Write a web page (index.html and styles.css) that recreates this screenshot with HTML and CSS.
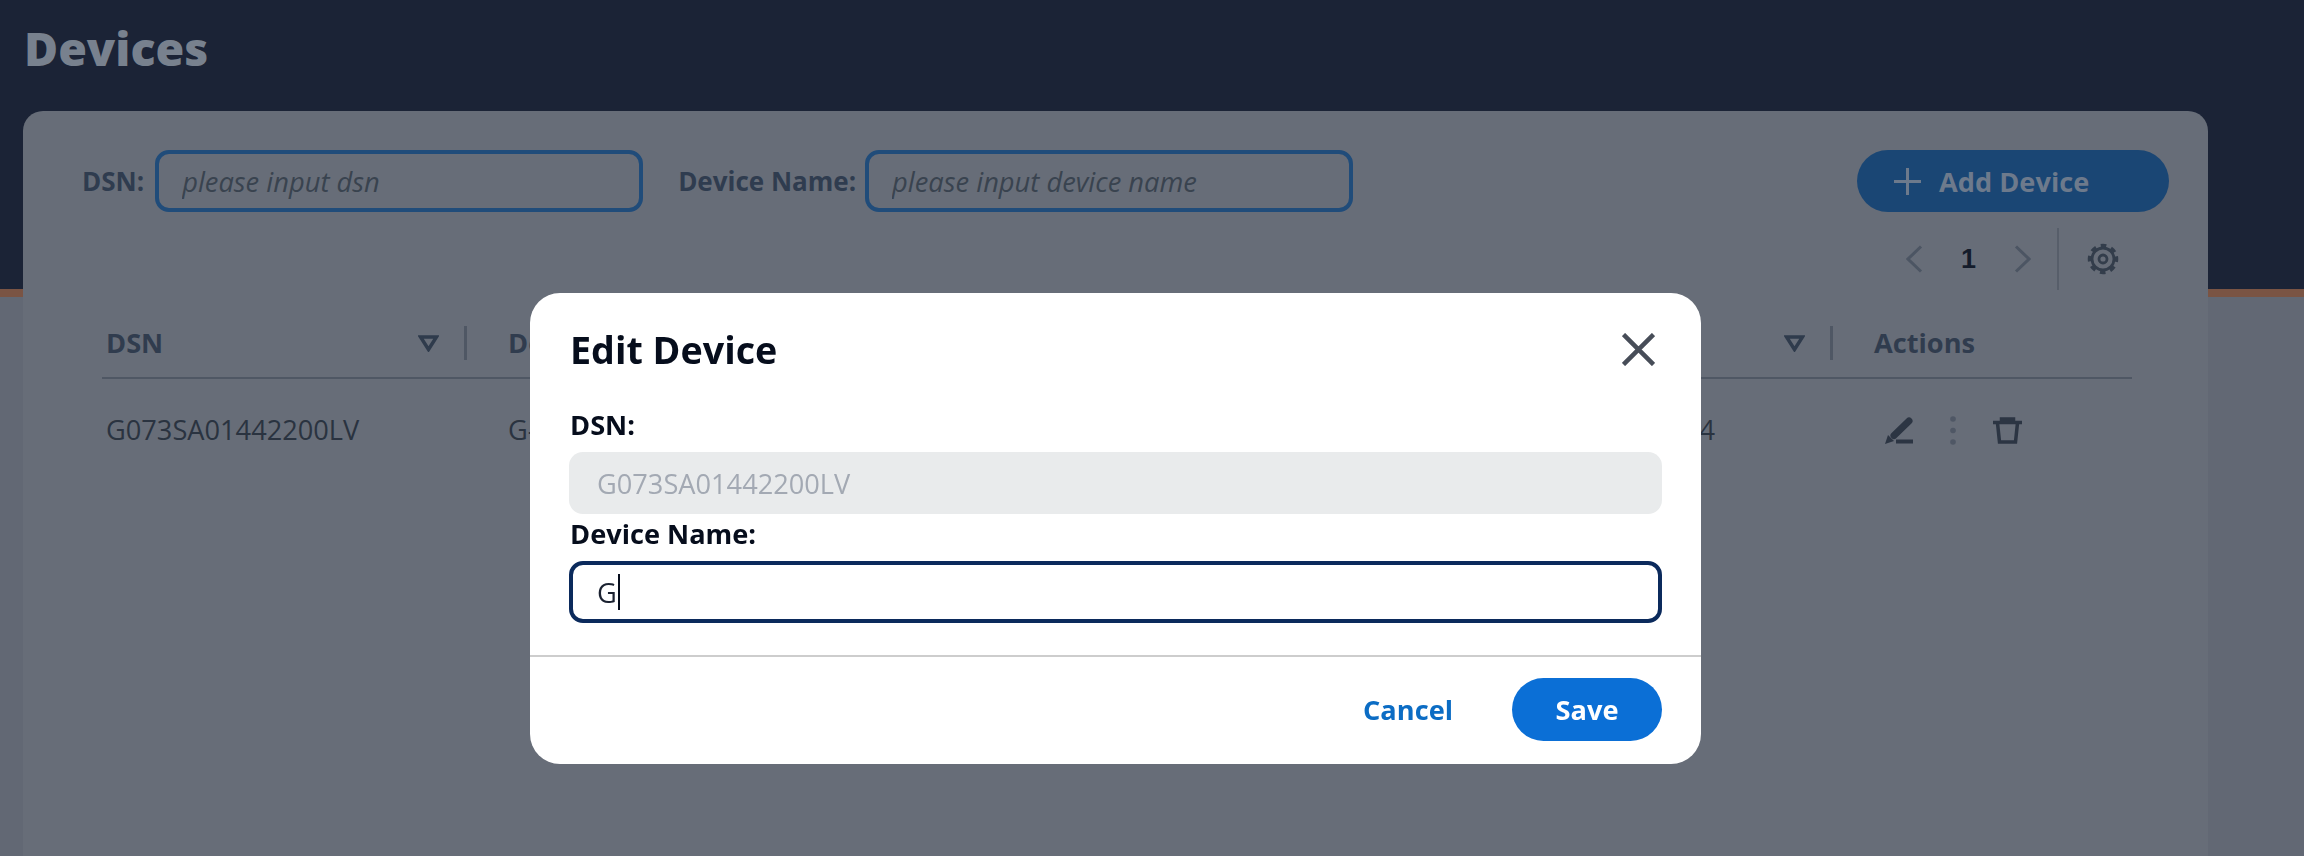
FILE: index.html
```html
<!DOCTYPE html>
<html lang="en">
  <head>
    <title>Devices</title>
    <meta charset="utf-8" />
    <link rel="stylesheet" href="styles.css">
  </head>
  <body>
    <div class="page-head">
      <h1 class="page-title">Devices</h1>
    </div>

    <div class="card">
      <div class="toolbar">
        <label class="search-label">DSN:</label>
        <input class="search-input" placeholder="please input dsn">
        <label class="search-label search-label-2">Device Name:</label>
        <input class="search-input" placeholder="please input device name">
        <button class="add-btn">
          <svg width="27" height="27" viewBox="0 0 27 27"><path d="M13.5 0v27M0 13.5h27" stroke="currentColor" stroke-width="3" fill="none"/></svg>
          Add Device
        </button>
      </div>

      <div class="pager">
        <svg class="chev" width="17" height="28" viewBox="0 0 17 28"><path d="M15 1.5 2 14l13 12.5" /></svg>
        <span class="page-num">1</span>
        <svg class="chev" width="17" height="28" viewBox="0 0 17 28"><path d="M2 1.5 15 14 2 26.5" /></svg>
        <span class="pager-sep"></span>
        <svg class="gear" width="32" height="32" viewBox="0 0 32 32">
          <circle cx="16" cy="16" r="11"/>
          <circle class="gear-teeth" cx="16" cy="16" r="13.500" transform="rotate(-11 16 16)"/>
          <circle cx="16" cy="16" r="4"/>
        </svg>
      </div>

      <div class="table">
        <div class="th"><span>DSN</span><span class="th-tools"><svg class="tri" width="21" height="17" viewBox="0 0 21 17"><path d="M2.500 2h16l-8 12.500z"/></svg><i class="th-sep"></i></span></div>
        <div class="th"><span class="th-clip">Device Name</span></div>
        <div class="th th-end"><span class="th-tools"><svg class="tri" width="21" height="17" viewBox="0 0 21 17"><path d="M2.500 2h16l-8 12.500z"/></svg><i class="th-sep"></i></span></div>
        <div class="th"><span>Actions</span></div>

        <div class="td">G073SA01442200LV</div>
        <div class="td">G-</div>
        <div class="td td-end">4</div>
        <div class="td td-actions">
          <svg width="28" height="27" viewBox="0 0 28 27">
            <path class="line-fat" d="M9 18.500 24 4"/>
            <path class="fill" d="M0 27l3-9 6 6z"/>
            <rect class="fill" x="11" y="22.500" width="17" height="4"/>
          </svg>
          <svg class="dots" width="6" height="29" viewBox="0 0 6 29"><circle cx="3" cy="3" r="2.800"/><circle cx="3" cy="14.500" r="2.800"/><circle cx="3" cy="26" r="2.800"/></svg>
          <svg width="29" height="27" viewBox="0 0 29 27">
            <path class="line" d="M0 5.500h29M8.500 4V2h12v2"/>
            <path class="line" d="M4.500 6l2 19h16l2-19"/>
          </svg>
        </div>
      </div>
    </div>

    <!-- modal sits over the dimmed page -->
    <div class="modal-wrap">
      <div class="modal">
        <div class="modal-head">
          <h2 class="modal-title">Edit Device</h2>
          <svg class="modal-close" width="33" height="33" viewBox="0 0 33 33"><path d="M1.500 1.500l30 30M31.500 1.500l-30 30"/></svg>
        </div>
        <div class="modal-body">
          <label class="field-label">DSN:</label>
          <input class="field field-off" value="G073SA01442200LV" disabled>
          <label class="field-label">Device Name:</label>
          <div class="field field-on">G<span class="caret"></span></div>
        </div>
        <div class="modal-foot">
          <button class="btn-cancel">Cancel</button>
          <button class="btn-save">Save</button>
        </div>
      </div>
    </div>
  </body>
</html>
```

FILE: styles.css
```css
html {
  height: 100%;
}
body {
  margin: 0;
  height: 100%;
  overflow: hidden;
  display: flex;
  flex-direction: column;
  background: #626874;
  font-family: "Open Sans", "Noto Sans", sans-serif;
  font-size: 27.200px;
  color: #2c3543;
}

.page-head {
  height: 289px;
  flex: none;
  background: #1b2336;
  border-bottom: 8px solid #7a5444;
}
.page-title {
  margin: 0;
  padding: 22px 0 0 24px;
  font-size: 46.500px;
  line-height: 52px;
  font-weight: 800;
  color: #78818e;
}

.card {
  flex: 1;
  margin: -186px 96px 0 23px;
  padding: 39px 39px 0 59px;
  background: #676d78;
  border-radius: 20px 20px 0 0;
}

.toolbar {
  display: flex;
  align-items: center;
}
.search-label {
  font-weight: 700;
  font-size: 26px;
  color: #2f3c4f;
  margin-right: 11px;
}
.search-label-2 {
  margin-left: 35px;
  margin-right: 9px;
}
.search-input {
  box-sizing: border-box;
  width: 488px;
  height: 62px;
  padding: 0 23px;
  background: transparent;
  border: 4px solid #204c7a;
  border-radius: 14px;
  font: inherit;
  font-size: 27.300px;
  outline: none;
}
.search-input::placeholder {
  font-style: italic;
  color: #39434f;
  opacity: 1;
}
.add-btn {
  margin-left: auto;
  width: 312px;
  height: 62px;
  padding: 0 0 0 37px;
  display: flex;
  align-items: center;
  gap: 18px;
  background: #1a4674;
  color: #6d7a8c;
  border: 0;
  border-radius: 31px;
  font: inherit;
  font-weight: 700;
}

.pager {
  display: flex;
  align-items: center;
  justify-content: flex-end;
  height: 62px;
  margin-top: 16px;
  padding-right: 50px;
}
.chev path {
  fill: none;
  stroke: #4c5563;
  stroke-width: 3;
}
.page-num {
  width: 91px;
  text-align: center;
  font-weight: 700;
  font-family: "Liberation Sans", sans-serif;
  font-size: 27px;
  color: #141c2b;
}
.pager-sep {
  width: 2px;
  height: 62px;
  margin: 0 28px 0 26px;
  background: #575e6a;
}
.gear circle {
  fill: none;
  stroke: #333d4b;
  stroke-width: 2.800;
}
.gear .gear-teeth {
  stroke-width: 3.500;
  stroke-dasharray: 5.500 5.100;
}

.table {
  display: grid;
  grid-template-columns: 402px 700px 666px 262px;
  margin: 19px 0 0 20px;
  width: 2030px;
}
.th {
  box-sizing: border-box;
  height: 70px;
  display: flex;
  align-items: center;
  justify-content: space-between;
  padding: 0 0 2px 4px;
  font-weight: 700;
  color: #303c4e;
  border-bottom: 2px solid #4f5764;
}
.th-end {
  justify-content: flex-end;
}
.th-clip {
  max-width: 22px;
  overflow: hidden;
  white-space: nowrap;
}
.th-tools {
  display: flex;
  align-items: center;
  gap: 25px;
  padding-right: 37px;
  margin-top: 2px;
}
.tri path {
  fill: none;
  stroke: #2f3b4c;
  stroke-width: 3.500;
}
.th-sep {
  width: 3px;
  height: 34px;
  background: #4f5764;
}
.td {
  padding: 32px 0 0 4px;
  line-height: 38px;
  color: #2a3340;
}
.td-end {
  text-align: right;
  padding-right: 155px;
}
.td-actions {
  display: flex;
  align-items: center;
  gap: 37px;
  padding-left: 15px;
}
.fill {
  fill: #2c3543;
}
.line {
  fill: none;
  stroke: #2c3543;
  stroke-width: 3.500;
}
.line-fat {
  fill: none;
  stroke: #2c3543;
  stroke-width: 7;
  stroke-linecap: round;
}
.dots circle {
  fill: #4f5765;
}

.modal-wrap {
  position: fixed;
  top: 293px;
  left: 530px;
}
.modal {
  box-sizing: border-box;
  width: 1171px;
  height: 471px;
  background: #fff;
  border-radius: 30px;
  color: #060d1c;
}
.modal-head {
  display: flex;
  align-items: center;
  justify-content: space-between;
  height: 112px;
  padding: 0 46px 0 40px;
}
.modal-title {
  margin: 0;
  font-size: 37.700px;
  font-weight: 700;
}
.modal-close path {
  fill: none;
  stroke: #474d58;
  stroke-width: 4.500;
}
.modal-body {
  box-sizing: border-box;
  height: 252px;
  padding: 0 39px 0 39px;
  border-bottom: 2px solid #cdcdcd;
}
.field-label {
  display: block;
  padding-left: 1px;
  margin-bottom: 7px;
  font-weight: 700;
  line-height: 40px;
}
.field {
  box-sizing: border-box;
  display: flex;
  align-items: center;
  width: 100%;
  height: 62px;
  padding: 0 24px;
  border-radius: 14px;
  border: 4px solid transparent;
  font: inherit;
}
.field-off {
  background: #e9ebec;
  color: #a3a9b3;
}
.field-on {
  border-color: #0b2a5c;
  color: #1a2130;
  background: #fff;
}
.caret {
  width: 2px;
  height: 36px;
  margin-left: 1px;
  background: #060d1c;
}
.modal-foot {
  display: flex;
  align-items: center;
  justify-content: flex-end;
  gap: 59px;
  padding: 21px 39px 0 0;
}
.btn-cancel,
.btn-save {
  border: 0;
  font: inherit;
  font-weight: 700;
  padding: 0;
}
.btn-cancel {
  background: none;
  color: #0b6cc4;
}
.btn-save {
  width: 150px;
  height: 63px;
  border-radius: 32px;
  background: #0b6fd6;
  color: #fff;
}
```
